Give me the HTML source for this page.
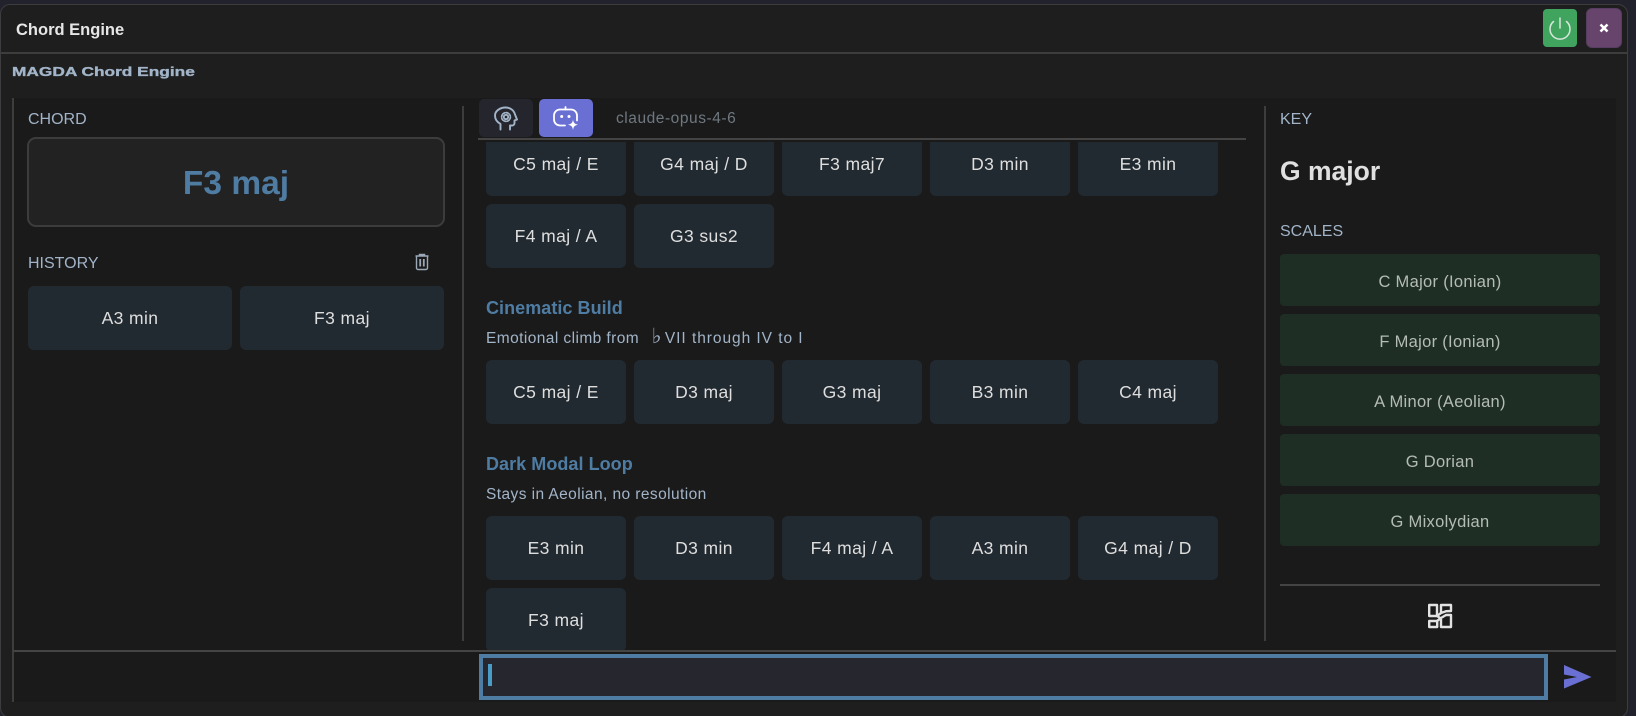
<!DOCTYPE html>
<html><head><meta charset="utf-8"><style>
html,body{margin:0;padding:0;width:1636px;height:716px;overflow:hidden;background:#22222c}
body{position:relative;font-family:"Liberation Sans",sans-serif;color:#e0e0e0}
.a{position:absolute;box-sizing:border-box}
.c{position:absolute;box-sizing:border-box;width:140px;height:64px;background:#222a31;border-radius:6px;display:flex;align-items:center;justify-content:center;font-size:17.5px;letter-spacing:.4px;padding-top:1px;color:#dedede;white-space:nowrap}
.s{position:absolute;box-sizing:border-box;left:1280px;width:320px;height:52px;background:#1e2e25;border-radius:4px;display:flex;align-items:center;justify-content:center;font-size:16.5px;letter-spacing:.3px;padding-top:4px;color:#b4bcb6;white-space:nowrap}
.l{position:absolute;font-size:16px;color:#a2b4c8;line-height:20px;white-space:nowrap}
.h{position:absolute;font-size:18px;letter-spacing:.05px;font-weight:bold;color:#4f7ca3;line-height:22px;white-space:nowrap;left:486px}
.d{position:absolute;font-size:15.5px;letter-spacing:.42px;color:#a2b4c8;line-height:18px;white-space:nowrap;left:486px}
.ln{position:absolute;background:#3d3d3d}
</style></head><body>
<div class="a" style="left:0;top:4px;width:1628px;height:714px;background:#1e1e1e;border:1.5px solid #3c3c3e;border-radius:10px"></div>
<div class="ln" style="left:1px;top:52px;width:1626px;height:2px"></div>
<div class="a" style="left:16px;top:20px;font-size:16.5px;font-weight:bold;color:#e6e6e6;line-height:20px;white-space:nowrap">Chord Engine</div>
<div class="a" style="left:12px;top:64px;font-size:13px;font-weight:bold;color:#a2b4c8;-webkit-text-stroke:.35px #a2b4c8;line-height:15px;white-space:nowrap;transform:scaleX(1.33);transform-origin:0 0">MAGDA Chord Engine</div>
<div class="a" style="left:1543px;top:9px;width:34px;height:38px;background:#40a45f;border-radius:4px"><svg width="34" height="38" viewBox="0 0 34 38" fill="none" stroke="#d6e8dc" stroke-width="1.5" stroke-linecap="round"><path d="M17 9v10"/><path d="M10.5 12.5a10 10 0 1 0 13 0"/></svg></div>
<div class="a" style="left:1586px;top:8px;width:36px;height:40px;background:#66446c;border:1.5px solid #573d60;border-radius:6px;display:flex;align-items:center;justify-content:center"><svg width="10" height="10" viewBox="0 0 10 10" stroke="#fff" stroke-width="2.6"><path d="M1.5 1.5l7 7M8.5 1.5l-7 7"/></svg></div>

<div class="a" style="left:12px;top:98px;width:1604px;height:604px;background:#1a1a1a"></div>
<div class="ln" style="left:12px;top:98px;width:2px;height:604px"></div>
<div class="ln" style="left:462px;top:106px;width:2px;height:535px"></div>
<div class="ln" style="left:1264px;top:106px;width:2px;height:535px"></div>

<div class="l" style="left:28px;top:110px">CHORD</div>
<div class="a" style="left:27px;top:137px;width:418px;height:90px;background:#222;border:2px solid #3c3c3c;border-radius:9px;display:flex;align-items:center;justify-content:center;padding-top:3px;font-size:33.5px;font-weight:bold;color:#4f7ca3">F3 maj</div>
<div class="l" style="left:28px;top:254px">HISTORY</div>
<svg class="a" style="left:415px;top:253px" width="14" height="18" viewBox="0 0 14 18" fill="none" stroke="#9aa8b8" stroke-width="1.4"><path d="M.5 3h13M4.500 3V1.500h5V3M1.500 3v12a1.500 1.500 0 0 0 1.500 1.500h8a1.500 1.500 0 0 0 1.500-1.500V3"/><path d="M5.200 6v7.500M8.800 6v7.500" stroke-width="1.800"/></svg>
<div class="c" style="left:28px;top:286px;width:204px">A3 min</div>
<div class="c" style="left:240px;top:286px;width:204px">F3 maj</div>

<div class="a" style="left:479px;top:99px;width:54px;height:38px;background:#25252e;border-radius:5px"><svg width="54" height="38" viewBox="0 0 54 38" fill="none" stroke="#a2b4c8" stroke-width="1.9" stroke-linejoin="round" stroke-linecap="round"><path d="M21.500 30.500v-5.500c-3.500-2-5.500-5-5.500-8.500C16 12 21 8.500 26.500 8.500c5 0 8.500 3 9.500 7l2 5-2.500 1v2.500a2.500 2.500 0 0 1-2.500 2.500h-2v4"/><circle cx="27" cy="18" r="2.200"/><circle cx="27" cy="18" r="4.400" stroke-width="1.700" stroke-dasharray="2 1.460"/></svg></div>
<div class="a" style="left:539px;top:99px;width:54px;height:38px;background:#6a6fd3;border-radius:5px"><svg width="54" height="38" viewBox="0 0 54 38" fill="none" stroke="#fff" stroke-width="1.8" stroke-linecap="round"><path d="M26.500 8v2.500"/><path d="M26 26.500h-5a6 6 0 0 1-6-6v-4a6 6 0 0 1 6-6h11a6 6 0 0 1 6 6v5"/><circle cx="22.700" cy="17.500" r="1.500" fill="#fff" stroke="none"/><circle cx="30" cy="17.500" r="1.500" fill="#fff" stroke="none"/><path d="M34 20.500c.6 3.500 1.600 4.500 5 5.200-3.400.7-4.400 1.700-5 5.300-.6-3.600-1.600-4.600-5-5.300 3.400-.7 4.400-1.700 5-5.200z" fill="#fff" stroke="none"/></svg></div>
<div class="a" style="left:616px;top:110px;font-size:15.5px;letter-spacing:.55px;color:#6f7880;line-height:18px;white-space:nowrap">claude-opus-4-6</div>
<div class="ln" style="left:478px;top:138px;width:768px;height:2px;background:#444"></div>

<div class="a" style="left:0;top:142px;width:1636px;height:508px;overflow:hidden">
<div class="c" style="left:486px;top:-10px">C5 maj / E</div>
<div class="c" style="left:634px;top:-10px">G4 maj / D</div>
<div class="c" style="left:782px;top:-10px">F3 maj7</div>
<div class="c" style="left:930px;top:-10px">D3 min</div>
<div class="c" style="left:1078px;top:-10px">E3 min</div>
<div class="c" style="left:486px;top:62px">F4 maj / A</div>
<div class="c" style="left:634px;top:62px">G3 sus2</div>
<div class="h" style="top:155px">Cinematic Build</div>
<div class="d" style="top:188px">Emotional climb from &nbsp;<span style="font-family:'DejaVu Sans',sans-serif;font-size:21px;line-height:0;margin:0 3px 0 3px">♭</span><span style="letter-spacing:.95px">VII through IV to I</span></div>
<div class="c" style="left:486px;top:218px">C5 maj / E</div>
<div class="c" style="left:634px;top:218px">D3 maj</div>
<div class="c" style="left:782px;top:218px">G3 maj</div>
<div class="c" style="left:930px;top:218px">B3 min</div>
<div class="c" style="left:1078px;top:218px">C4 maj</div>
<div class="h" style="top:311px">Dark Modal Loop</div>
<div class="d" style="top:344px">Stays in Aeolian, no resolution</div>
<div class="c" style="left:486px;top:374px">E3 min</div>
<div class="c" style="left:634px;top:374px">D3 min</div>
<div class="c" style="left:782px;top:374px">F4 maj / A</div>
<div class="c" style="left:930px;top:374px">A3 min</div>
<div class="c" style="left:1078px;top:374px">G4 maj / D</div>
<div class="c" style="left:486px;top:446px">F3 maj</div>
</div>

<div class="l" style="left:1280px;top:110px">KEY</div>
<div class="a" style="left:1280px;top:156px;font-size:26.5px;font-weight:bold;color:#e0e0e0;line-height:30px;white-space:nowrap">G major</div>
<div class="l" style="left:1280px;top:222px">SCALES</div>
<div class="s" style="top:254px">C Major (Ionian)</div>
<div class="s" style="top:314px">F Major (Ionian)</div>
<div class="s" style="top:374px">A Minor (Aeolian)</div>
<div class="s" style="top:434px">G Dorian</div>
<div class="s" style="top:494px">G Mixolydian</div>
<div class="ln" style="left:1280px;top:584px;width:320px;height:2px;background:#444"></div>
<svg class="a" style="left:1427px;top:603px" width="26" height="26" viewBox="0 0 26 26" fill="none" stroke="#e2e2e2" stroke-width="2.4" stroke-linejoin="round"><path d="M2.200 2h7.800v11H2.200zM2.200 18h8v6H2.200zM14 2h10v6l-5 .2-5 1.800zM14 15l5-3h5v12H14z"/><path d="M10 13l4 2.500M14 10l-4 3M10 18l4-3"/></svg>

<div class="ln" style="left:13px;top:650px;width:1603px;height:2px;background:#444"></div>
<div class="a" style="left:479px;top:654px;width:1069px;height:46px;background:#26262f;border:4px solid #4f7ca3"></div>
<div class="a" style="left:488px;top:664px;width:4px;height:22px;background:#4a9cc8"></div>
<svg class="a" style="left:1564px;top:665px" width="28" height="24" viewBox="0 0 28 24"><path d="M0 0L27.500 12 0 23.500V14.500L13 12 0 9.500z" fill="#6a6fd3"/></svg>
</body></html>
